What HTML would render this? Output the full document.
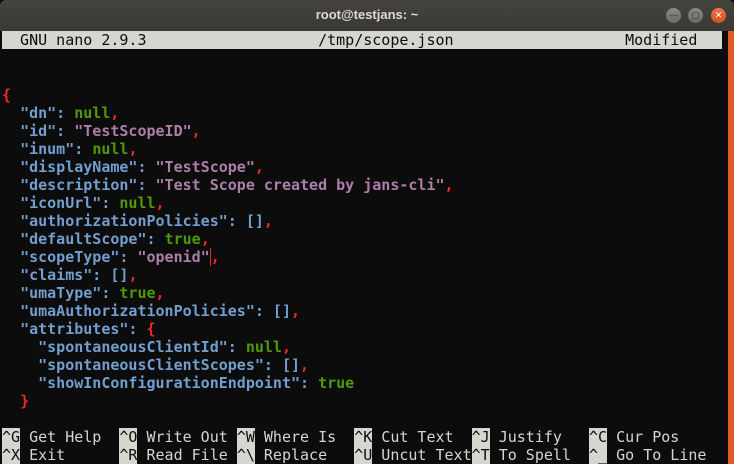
<!DOCTYPE html>
<html><head><meta charset="utf-8"><style>
body{margin:0;width:734px;height:464px;background:#0c0c0c;overflow:hidden;position:relative;font-family:"Liberation Mono",monospace}
#tb{position:absolute;left:0;top:0;width:734px;height:31px;background:linear-gradient(#45443f,#393834);border-radius:6px 6px 0 0}
#tb .t{position:absolute;left:0;width:734px;top:7px;text-align:center;color:#dfdbd2;font:bold 13px "Liberation Sans",sans-serif}
.b{position:absolute;top:8px;width:15px;height:15px;border-radius:50%;background:linear-gradient(#8a8983,#6b6a65);font:9px "Liberation Sans",sans-serif;color:#3a3935;text-align:center;line-height:15px}
#sb{position:absolute;left:728px;top:31px;width:6px;height:433px;background:#e25c25}
pre{position:absolute;left:2px;margin:0;font-size:15px;line-height:18px;font-weight:bold;color:#d3d7cf;white-space:pre}
.hd{position:absolute;left:2px;top:31px;width:720px;height:18px;background:#d3d7cf}
.k{color:#729fcf}.s{color:#ad7fa8}.g{color:#4e9a06}.r{color:#ef2929}
.inv{background:#d3d7cf;color:#0c0c0c}
</style></head><body>
<div id="tb"><div class="t">root@testjans: ~</div>
<div class="b" style="left:666px">—</div><div class="b" style="left:688px">▢</div>
<div class="b" style="left:711px;background:linear-gradient(#f0744a,#d94e1f);color:#fff">✕</div></div>
<div id="sb"></div>
<div class="hd"></div>
<pre style="top:31px;color:#0c0c0c;font-weight:normal">  GNU nano 2.9.3                   /tmp/scope.json                   Modified</pre>
<pre style="top:86px"><span class="r">{</span>
  <span class="k">"dn":</span> <span class="g">null</span><span class="r">,</span>
  <span class="k">"id":</span> <span class="s">"TestScopeID"</span><span class="r">,</span>
  <span class="k">"inum":</span> <span class="g">null</span><span class="r">,</span>
  <span class="k">"displayName":</span> <span class="s">"TestScope"</span><span class="r">,</span>
  <span class="k">"description":</span> <span class="s">"Test Scope created by jans-cli"</span><span class="r">,</span>
  <span class="k">"iconUrl":</span> <span class="g">null</span><span class="r">,</span>
  <span class="k">"authorizationPolicies": []</span><span class="r">,</span>
  <span class="k">"defaultScope":</span> <span class="g">true</span><span class="r">,</span>
  <span class="k">"scopeType":</span> <span class="s">"openid"</span><span class="r" style="border-left:1px solid #ef2929">,</span>
  <span class="k">"claims": []</span><span class="r">,</span>
  <span class="k">"umaType":</span> <span class="g">true</span><span class="r">,</span>
  <span class="k">"umaAuthorizationPolicies": []</span><span class="r">,</span>
  <span class="k">"attributes":</span> <span class="r">{</span>
    <span class="k">"spontaneousClientId":</span> <span class="g">null</span><span class="r">,</span>
    <span class="k">"spontaneousClientScopes": []</span><span class="r">,</span>
    <span class="k">"showInConfigurationEndpoint":</span> <span class="g">true</span>
  <span class="r">}</span></pre>
<pre style="top:428px;font-weight:normal"><span class="inv">^G</span> Get Help  <span class="inv">^O</span> Write Out <span class="inv">^W</span> Where Is  <span class="inv">^K</span> Cut Text  <span class="inv">^J</span> Justify   <span class="inv">^C</span> Cur Pos
<span class="inv">^X</span> Exit      <span class="inv">^R</span> Read File <span class="inv">^\</span> Replace   <span class="inv">^U</span> Uncut Text<span class="inv">^T</span> To Spell  <span class="inv">^_</span> Go To Line</pre>
</body></html>
